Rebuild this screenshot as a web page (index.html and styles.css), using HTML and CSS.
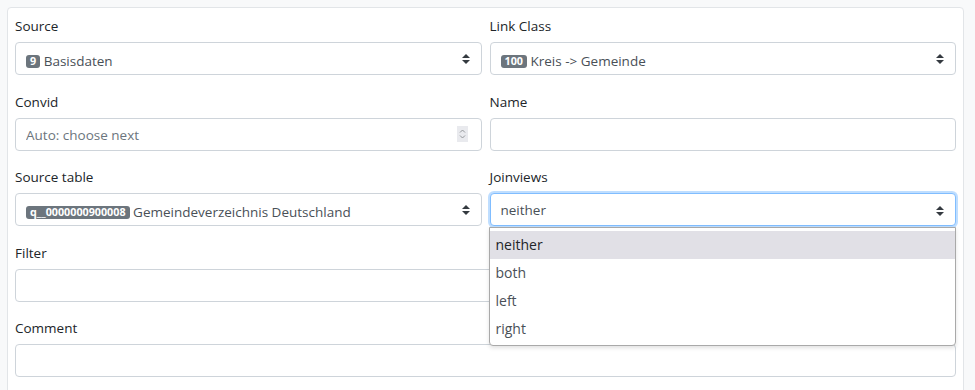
FILE: index.html
```html
<!DOCTYPE html>
<html lang="en">
<head>
    <meta charset="UTF-8">
    <title>Link</title>
    <link rel="stylesheet" href="styles.css">
</head>
<body>
    <div class="card">
        <div class="row">
            <div class="form-group">
                <label>Source</label>
                <div class="form-select has-badge">
                    <span class="value"><span class="badge">9</span> Basisdaten</span>
                    <svg class="caret" width="8" height="10" viewBox="0 0 4 5"><path d="M2 0L0 2h4zm0 5L0 3h4z" fill="#343a40"/></svg>
                </div>
            </div>
            <div class="form-group">
                <label>Link Class</label>
                <div class="form-select has-badge">
                    <span class="value"><span class="badge">100</span> Kreis -&gt; Gemeinde</span>
                    <svg class="caret" width="8" height="10" viewBox="0 0 4 5"><path d="M2 0L0 2h4zm0 5L0 3h4z" fill="#343a40"/></svg>
                </div>
            </div>
        </div>

        <div class="row">
            <div class="form-group">
                <label>Convid</label>
                <div class="number-wrap">
                    <input class="form-control" type="text" placeholder="Auto: choose next">
                    <span class="spinner">
                        <svg width="11" height="16" viewBox="0 0 11 16">
                            <path d="M3 6.5L5.5 4L8 6.5" fill="none" stroke="#8a8d91" stroke-width="0.9"/>
                            <path d="M3 9.5L5.5 12L8 9.5" fill="none" stroke="#8a8d91" stroke-width="0.9"/>
                        </svg>
                    </span>
                </div>
            </div>
            <div class="form-group">
                <label>Name</label>
                <input class="form-control" type="text">
            </div>
        </div>

        <div class="row">
            <div class="form-group">
                <label>Source table</label>
                <div class="form-select has-badge">
                    <span class="value"><span class="badge">q__0000000900008</span> Gemeindeverzeichnis Deutschland</span>
                    <svg class="caret" width="8" height="10" viewBox="0 0 4 5"><path d="M2 0L0 2h4zm0 5L0 3h4z" fill="#343a40"/></svg>
                </div>
            </div>
            <div class="form-group">
                <label>Joinviews</label>
                <div class="select-wrap">
                    <div class="form-select focused">
                        <span class="value">neither</span>
                        <svg class="caret" width="8" height="10" viewBox="0 0 4 5"><path d="M2 0L0 2h4zm0 5L0 3h4z" fill="#343a40"/></svg>
                    </div>
                    <ul class="listbox">
                        <li class="selected">neither</li>
                        <li>both</li>
                        <li>left</li>
                        <li>right</li>
                    </ul>
                </div>
            </div>
        </div>

        <div class="form-group">
            <label>Filter</label>
            <input class="form-control" type="text">
        </div>

        <div class="form-group">
            <label>Comment</label>
            <input class="form-control" type="text">
        </div>
    </div>
</body>
</html>
```

FILE: styles.css
```css
:root {
    --text-color: #212529;
    --input-color: #495057;
    --border-color: #ced4da;
    --badge-color: #6c757d;
}
body {
    margin: 0;
    padding: 7px 11px 0 7px;
    background-color: #f8f9fa;
    font-family: 'Open Sans', 'Noto Sans', sans-serif;
    font-size: 13.5px;
    line-height: 21px;
    color: var(--text-color);
}
.card {
    background-color: white;
    border: 1px solid #e2e5e8;
    border-radius: 4px;
    padding: 7px 7px 20px 7px;
}
.row {
    display: grid;
    grid-template-columns: 1fr 1fr;
    column-gap: 8px;
}
.form-group {
    margin-bottom: 15.5px;
}
label {
    display: block;
    margin-bottom: 6px;
    padding-top: 1px;
    height: 20px;
}
.form-control,
.form-select {
    box-sizing: border-box;
    display: flex;
    align-items: center;
    width: 100%;
    height: 33px;
    margin: 0;
    padding: 2px 11px 0 10px;
    border: 1px solid var(--border-color);
    border-radius: 4px;
    background-color: white;
    color: var(--input-color);
    font-family: inherit;
    font-size: 13.5px;
    outline: none;
}
.form-select.has-badge {
    padding-top: 5px;
}
.form-control::placeholder {
    color: #6c757d;
}
.form-select .value {
    flex: 1;
    white-space: nowrap;
}
.caret {
    flex: none;
}
.has-badge .caret {
    margin-top: -5px;
}
.badge {
    display: inline-block;
    padding: 1px 4px;
    border-radius: 3px;
    background-color: var(--badge-color);
    color: white;
    font-size: 10.75px;
    font-weight: 700;
    line-height: 11px;
    vertical-align: 1px;
}
.number-wrap {
    position: relative;
}
.spinner {
    position: absolute;
    top: 8px;
    right: 14px;
    width: 11px;
    height: 16px;
    background-color: #e9eaee;
}
.spinner svg {
    display: block;
}
.select-wrap {
    position: relative;
}
.form-select.focused {
    border-color: #80bdff;
    box-shadow: 0 0 0 2px rgba(0, 123, 255, 0.25);
}
.listbox {
    position: absolute;
    top: 34px;
    left: -1px;
    right: 0;
    z-index: 10;
    margin: 0;
    padding: 3px 0 2px 0;
    list-style: none;
    background-color: white;
    border: 1px solid #a9a9a9;
    border-radius: 0 0 4px 4px;
    box-shadow: 0 2px 4px rgba(0, 0, 0, 0.12);
    font-size: 14px;
}
.listbox li {
    height: 28px;
    line-height: 28px;
    padding-left: 6px;
    color: var(--input-color);
}
.listbox li.selected {
    background-color: #e1e0e6;
    color: var(--text-color);
}
```
